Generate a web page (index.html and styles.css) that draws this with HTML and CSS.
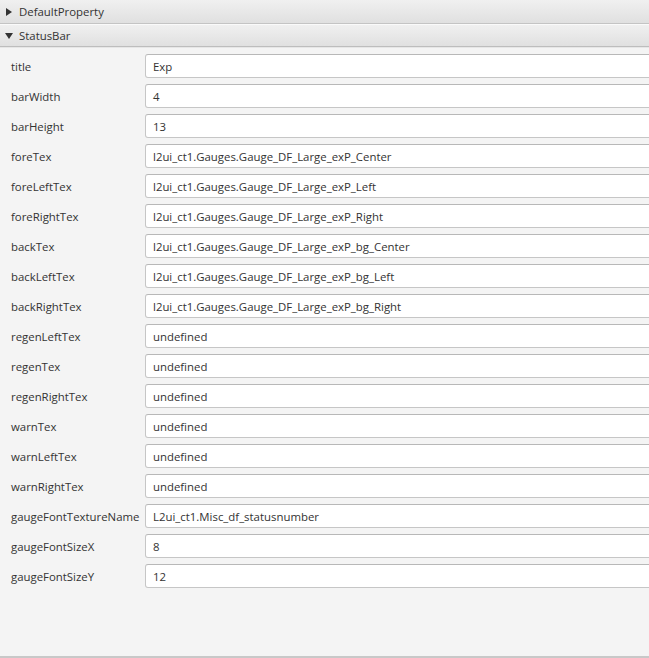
FILE: index.html
```html
<!DOCTYPE html>
<html>
<head>
<meta charset="utf-8">
<link rel="stylesheet" href="styles.css">
</head>
<body>
<div class="panel">
  <div class="section-head"><span class="arrow right"></span><span>DefaultProperty</span></div>
  <div class="section-head open"><span class="arrow down"></span><span>StatusBar</span></div>
  <div class="props">
    <div class="row"><span class="label">title</span><div class="field">Exp</div></div>
    <div class="row"><span class="label">barWidth</span><div class="field">4</div></div>
    <div class="row"><span class="label">barHeight</span><div class="field">13</div></div>
    <div class="row"><span class="label">foreTex</span><div class="field">l2ui_ct1.Gauges.Gauge_DF_Large_exP_Center</div></div>
    <div class="row"><span class="label">foreLeftTex</span><div class="field">l2ui_ct1.Gauges.Gauge_DF_Large_exP_Left</div></div>
    <div class="row"><span class="label">foreRightTex</span><div class="field">l2ui_ct1.Gauges.Gauge_DF_Large_exP_Right</div></div>
    <div class="row"><span class="label">backTex</span><div class="field">l2ui_ct1.Gauges.Gauge_DF_Large_exP_bg_Center</div></div>
    <div class="row"><span class="label">backLeftTex</span><div class="field">l2ui_ct1.Gauges.Gauge_DF_Large_exP_bg_Left</div></div>
    <div class="row"><span class="label">backRightTex</span><div class="field">l2ui_ct1.Gauges.Gauge_DF_Large_exP_bg_Right</div></div>
    <div class="row"><span class="label">regenLeftTex</span><div class="field">undefined</div></div>
    <div class="row"><span class="label">regenTex</span><div class="field">undefined</div></div>
    <div class="row"><span class="label">regenRightTex</span><div class="field">undefined</div></div>
    <div class="row"><span class="label">warnTex</span><div class="field">undefined</div></div>
    <div class="row"><span class="label">warnLeftTex</span><div class="field">undefined</div></div>
    <div class="row"><span class="label">warnRightTex</span><div class="field">undefined</div></div>
    <div class="row"><span class="label">gaugeFontTextureName</span><div class="field">L2ui_ct1.Misc_df_statusnumber</div></div>
    <div class="row"><span class="label">gaugeFontSizeX</span><div class="field">8</div></div>
    <div class="row"><span class="label">gaugeFontSizeY</span><div class="field">12</div></div>
  </div>
</div>
</body>
</html>
```
FILE: styles.css
```css
html, body {
  margin: 0;
  padding: 0;
  width: 649px;
  height: 658px;
  overflow: hidden;
  background: #f4f4f4;
}
.panel {
  height: 656px;
  border-bottom: 2px solid #c8c8c8;
  font-family: "Open Sans", "Noto Sans", sans-serif;
  font-size: 11.4px;
  color: #333;
  display: flex;
  flex-direction: column;
}
.section-head {
  height: 23px;
  display: flex;
  align-items: center;
  gap: 6px;
  padding-left: 5px;
  background: linear-gradient(#f0f0f0, #e0e0e0);
  border-bottom: 1px solid #c4c4c4;
  border-top: 1px solid #fafafa;
  box-sizing: border-box;
}
.section-head:first-child {
  border-top: none;
  height: 24px;
}
.section-head.open {
  border-bottom: 1px solid #bdbdbd;
  box-shadow: 0 1px 0 #e6e6e6;
}
.arrow {
  width: 0;
  height: 0;
}
.arrow.right {
  border-top: 4px solid transparent;
  border-bottom: 4px solid transparent;
  border-left: 6px solid #333;
  margin-left: 1px;
  margin-right: 1px;
}
.arrow.down {
  border-left: 4px solid transparent;
  border-right: 4px solid transparent;
  border-top: 6px solid #333;
}
.props {
  padding-top: 7px;
  display: flex;
  flex-direction: column;
  gap: 6px;
}
.row {
  display: flex;
  align-items: center;
  height: 24px;
}
.label {
  width: 134px;
  padding-left: 11px;
  flex-shrink: 0;
  white-space: nowrap;
}
.field {
  flex: 1;
  height: 24px;
  box-sizing: border-box;
  margin-right: -10px;
  background: #fff;
  border: 1px solid #c6c6c6;
  border-top-color: #b8b8b8;
  border-radius: 3px;
  padding-left: 7px;
  display: flex;
  align-items: center;
  white-space: nowrap;
}
```
